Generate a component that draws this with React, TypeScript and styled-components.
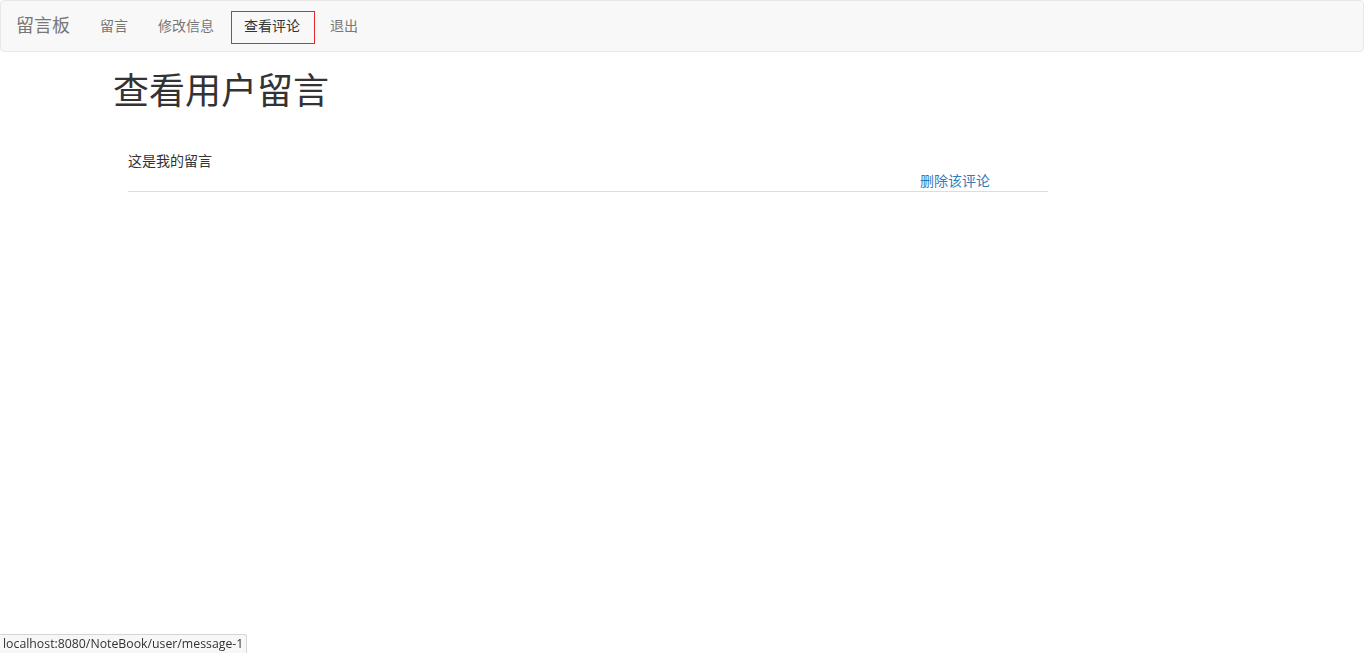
import styled, { createGlobalStyle } from 'styled-components';

const GlobalStyle = createGlobalStyle`
  html, body {
    margin: 0;
    padding: 0;
    background: #fff;
  }
  body {
    font-family: "Liberation Sans", "Noto Sans CJK SC", sans-serif;
    font-size: 14px;
    line-height: 1.42857;
    color: #333;
  }
`;

const Navbar = styled.nav`
  display: flex;
  align-items: stretch;
  height: 50px;
  background-color: #f8f8f8;
  border: 1px solid #e7e7e7;
  border-radius: 4px;
  margin-bottom: 20px;
`;

const Brand = styled.a`
  display: block;
  padding: 15px;
  height: 50px;
  box-sizing: border-box;
  font-size: 18px;
  line-height: 20px;
  color: #777;
  text-decoration: none;
`;

const NavList = styled.ul`
  display: flex;
  list-style: none;
  margin: 0;
  padding: 0;
`;

const NavItem = styled.li`
  display: flex;
  align-items: flex-start;
`;

const NavLink = styled.a`
  display: block;
  padding: 15px;
  font-size: 14px;
  line-height: 20px;
  text-decoration: none;
  color: #777;
`;

// the current page: framed in red
const ActiveLink = styled(NavLink)`
  color: #333;
  padding: 4px 14px 7px 12px;
  margin: 10px 0 0 2px;
  border: 1px solid #e8262e;
`;

const Container = styled.main`
  width: 1170px;
  margin: 0 auto;
  padding: 0 15px;
  box-sizing: border-box;
`;

const Title = styled.h1`
  font-size: 36px;
  font-weight: 400;
  line-height: 1.1;
  margin: 20px 0 10px;
  padding-left: 1px;
  color: #333;
`;

const MessageList = styled.div`
  margin-top: 39px;
  padding: 0 15px 0 16px;
`;

const MessageRow = styled.div`
  width: 920px;
  border-bottom: 1px solid #ddd;
`;

const MessageText = styled.p`
  margin: 0;
  line-height: 20px;
  color: #333;
`;

const DeleteLink = styled.a`
  display: block;
  margin-left: 792px;
  line-height: 20px;
  color: #337ab7;
  text-decoration: none;
`;

const StatusBar = styled.div`
  position: fixed;
  left: 0;
  bottom: 0;
  height: 18px;
  padding: 0 3px;
  background: #f7f7f7;
  border: 1px solid #d5d5d5;
  border-left: none;
  border-bottom: none;
  border-top-right-radius: 3px;
  font-family: "Open Sans", "Noto Sans", sans-serif;
  font-size: 12.3px;
  line-height: 18px;
  color: #333;
`;

export default function App() {
  const links = ['留言', '修改信息', '查看评论', '退出'];
  return (
    <>
      <GlobalStyle />
      <Navbar>
        <Brand href="#">留言板</Brand>
        <NavList>
          {links.map((l) => (
            <NavItem key={l}>
              {l === '查看评论' ? (
                <ActiveLink href="#">{l}</ActiveLink>
              ) : (
                <NavLink href="#">{l}</NavLink>
              )}
            </NavItem>
          ))}
        </NavList>
      </Navbar>
      <Container>
        <Title>查看用户留言</Title>
        <MessageList>
          <MessageRow>
            <MessageText>这是我的留言</MessageText>
            <DeleteLink href="#">删除该评论</DeleteLink>
          </MessageRow>
        </MessageList>
      </Container>
      <StatusBar>localhost:8080/NoteBook/user/message-1</StatusBar>
    </>
  );
}
